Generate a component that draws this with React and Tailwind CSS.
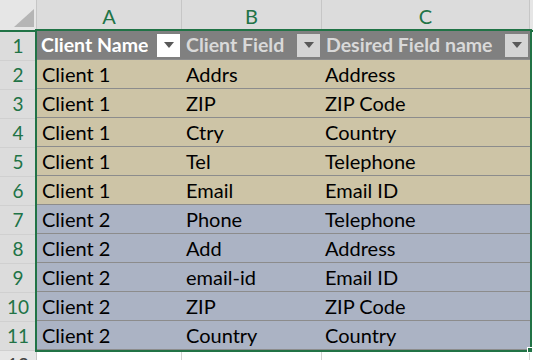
const rows = [
  ["Client 1", "Addrs", "Address"],
  ["Client 1", "ZIP", "ZIP Code"],
  ["Client 1", "Ctry", "Country"],
  ["Client 1", "Tel", "Telephone"],
  ["Client 1", "Email", "Email ID"],
  ["Client 2", "Phone", "Telephone"],
  ["Client 2", "Add", "Address"],
  ["Client 2", "email-id", "Email ID"],
  ["Client 2", "ZIP", "ZIP Code"],
  ["Client 2", "Country", "Country"],
];

const font = { fontFamily: "Lato, 'Noto Sans', sans-serif" };

function FilterButton({ active }) {
  return (
    <div
      className={`flex h-[23px] w-[23px] shrink-0 items-center justify-center ${
        active ? "bg-white" : "bg-[#d4d4d4]"
      }`}
    >
      <svg width="10" height="6" viewBox="0 0 10 6">
        <path d="M0 0 H10 L5 6 Z" fill="#595959" />
      </svg>
    </div>
  );
}

function HeaderCell({ label, width, active }) {
  return (
    <div
      className={`flex h-[29px] items-center justify-between border-b border-[#8c8c8c] bg-[#808080] pl-[4px] pr-[2px] text-[19.5px] font-bold ${width} ${
        active ? "text-white" : "text-[#d9d9d9]"
      }`}
    >
      <span className="overflow-hidden whitespace-nowrap">{label}</span>
      <FilterButton active={active} />
    </div>
  );
}

export default function App() {
  return (
    <div className="h-[360px] w-[533px] overflow-hidden bg-white" style={font}>
      {/* column letters */}
      <div className="flex h-[32px] border-b-2 border-[#217346] bg-[#e6e6e6]">
        <div className="flex w-[37px] items-end justify-end border-r border-[#c6c6c6] pb-[3px] pr-[2px]">
          <svg width="20" height="18" viewBox="0 0 20 18">
            <path d="M20 0 V18 H0 Z" fill="#b5b5b5" />
          </svg>
        </div>
        {[
          ["A", "w-[145px]"],
          ["B", "w-[140px]"],
          ["C", "w-[208px]"],
        ].map(([letter, w]) => (
          <div
            key={letter}
            className={`flex items-center justify-center border-r border-[#c6c6c6] bg-[#dcdcdc] pt-[2px] text-[20px] text-[#217346] ${w}`}
          >
            {letter}
          </div>
        ))}
        <div className="flex-1" />
      </div>

      <div className="flex">
        {/* row numbers */}
        <div className="w-[37px] shrink-0 border-r border-[#c6c6c6] bg-[#e6e6e6]">
          {Array.from({ length: 12 }, (_, i) => (
            <div
              key={i}
              className={`flex h-[29px] items-center justify-center border-b border-[#d0d0d0] text-[19px] ${
                i < 11 ? "bg-[#dcdcdc] text-[#217346]" : "text-[#444]"
              }`}
            >
              {i + 1}
            </div>
          ))}
        </div>

        <div className="w-[493px] shrink-0">
          <div className="relative outline-2 outline-[#217346] -mt-[1px]">
            <div className="flex">
              <HeaderCell label="Client Name" width="w-[145px]" active />
              <HeaderCell label="Client Field" width="w-[140px]" />
              <HeaderCell label="Desired Field name" width="w-[208px]" />
            </div>
            {rows.map((r, i) => (
              <div
                key={i}
                className={`flex h-[29px] items-center border-b border-[#8c8c8c] text-[20px] text-black ${
                  r[0] === "Client 1" ? "bg-[#cdc4a6]" : "bg-[#abb3c4]"
                }`}
              >
                <div className="w-[145px] pl-[5px]">{r[0]}</div>
                <div className="w-[140px] pl-[4px]">{r[1]}</div>
                <div className="w-[208px] pl-[3px]">{r[2]}</div>
              </div>
            ))}
            <div className="absolute -bottom-[3px] -right-[3px] h-[6px] w-[6px] border border-white bg-[#217346]" />
          </div>
          <div className="flex h-[29px] border-b border-[#d4d4d4]">
            <div className="w-[145px] border-r border-[#d4d4d4]" />
            <div className="w-[140px] border-r border-[#d4d4d4]" />
            <div className="w-[208px] border-r border-[#d4d4d4]" />
          </div>
        </div>
        <div className="flex-1" />
      </div>
    </div>
  );
}
